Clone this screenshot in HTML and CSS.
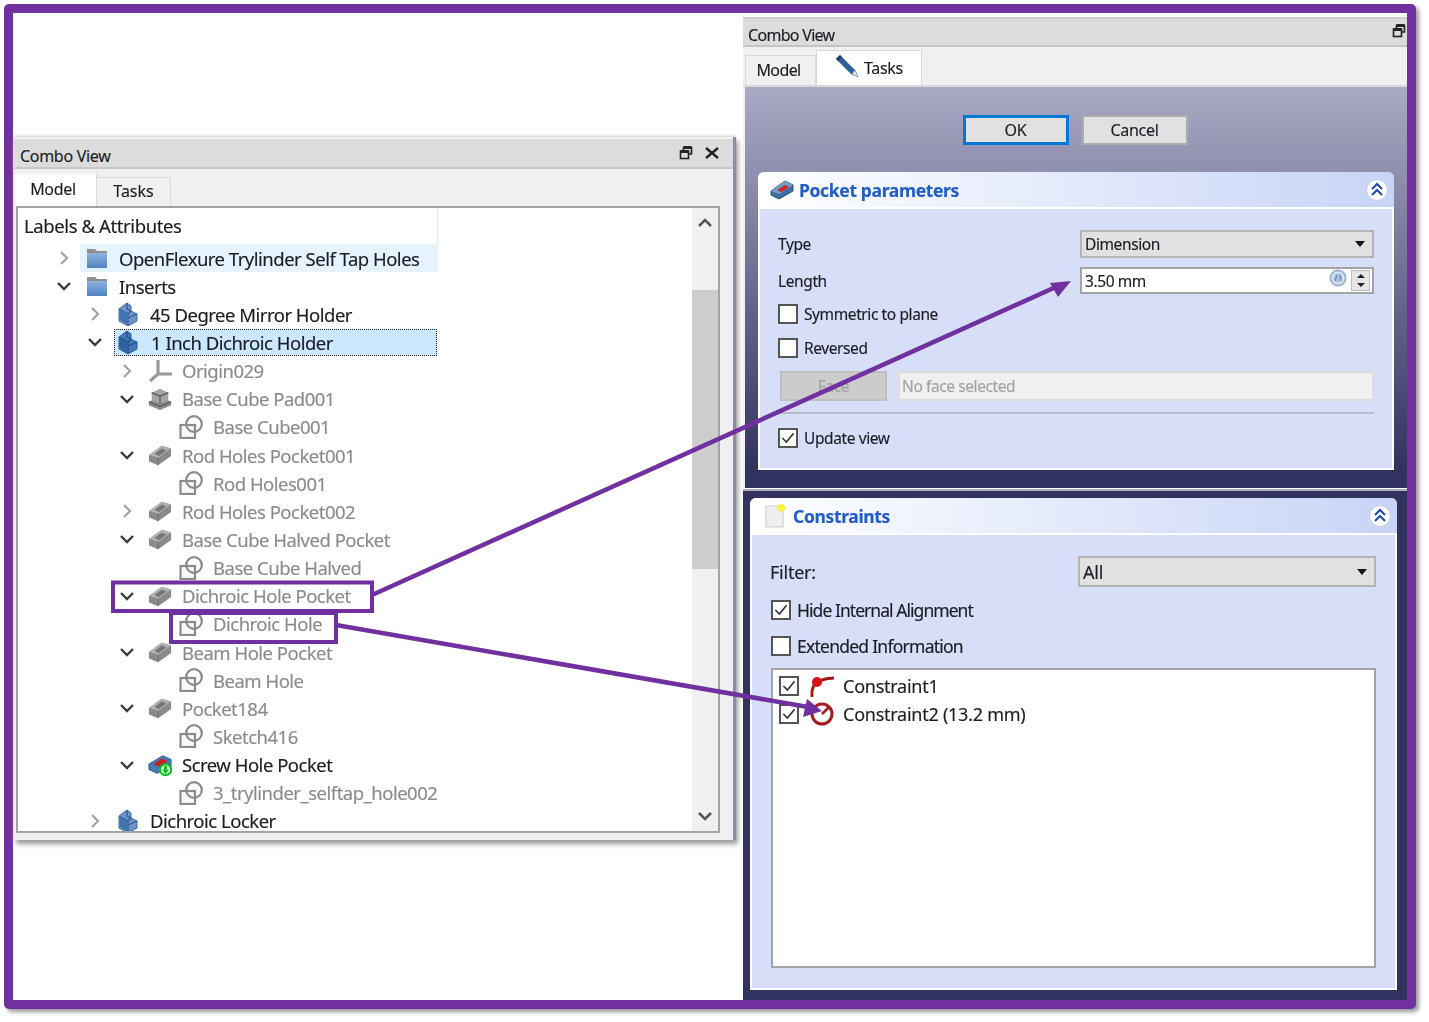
FILE: index.html
```html
<!DOCTYPE html>
<html lang="en">
<head>
<meta charset="utf-8">
<title>Combo View</title>
<link rel="stylesheet" href="styles.css">
</head>
<body>
<svg class="sprite" width="0" height="0" aria-hidden="true">
  <defs>
    <linearGradient id="gFolder" x1="0" y1="0" x2="0" y2="1"><stop offset="0" stop-color="#8db4e2"/><stop offset="1" stop-color="#4f82c2"/></linearGradient>
    <symbol id="folder" viewBox="0 0 24 24">
      <path d="M2 3h8l2 2h10v16H2z" fill="#8f8f8f"/>
      <path d="M2 7h20v15H2z" fill="url(#gFolder)"/>
    </symbol>
    <symbol id="part" viewBox="0 0 22 24">
      <path d="M2 7 10 1l4 3v5l6 3v7l-9 5-9-5z" fill="#3f78ba" stroke="#2a5b96"/>
      <path d="M10 1v6l4 2M2 7l9 5v12M11 12l3-3M11 16l9-4" fill="none" stroke="#234f86" stroke-width="1.2"/>
      <path d="M3 8l7 4v10l-7-4z" fill="#2e639f"/>
    </symbol>
    <symbol id="partDim" viewBox="0 0 22 24">
      <path d="M2 7 10 1l4 3v5l6 3v7l-9 5-9-5z" fill="#6d94c4" stroke="#3d6a9f"/>
      <path d="M10 1v6l4 2M2 7l9 5v12M11 12l3-3M11 16l9-4" fill="none" stroke="#2c5a90" stroke-width="1.2"/>
      <path d="M3 8l7 4v10l-7-4z" fill="#3f74ae"/>
    </symbol>
    <symbol id="pocket" viewBox="0 0 26 24">
      <path d="M1 12 15 2l10 3v8L11 23 1 19z" fill="#8a8a8a"/>
      <path d="M1 12 15 2l10 3-14 10z" fill="#b0b0b0"/>
      <path d="M7 11l8-6 5 2-8 6z" fill="#767676"/>
      <path d="M11 15v8" stroke="#6a6a6a"/>
    </symbol>
    <symbol id="pad" viewBox="0 0 26 24">
      <path d="M1 15l12-6 12 6v4l-12 5-12-5z" fill="#8c8c8c"/>
      <path d="M4 5l9-4 9 4v8l-9 4-9-4z" fill="#a5a5a5"/>
      <path d="M4 5l9 4 9-4M13 9v8" fill="none" stroke="#5f5f5f" stroke-width="1.500"/>
      <path d="M1 15l12 5 12-5" fill="none" stroke="#5f5f5f" stroke-width="1.500"/>
    </symbol>
    <symbol id="sketch" viewBox="0 0 24 24">
      <rect x="1.500" y="10" width="14.500" height="13" fill="#f8f8f8" stroke="#8b8b8b" stroke-width="2.200"/>
      <circle cx="15" cy="9" r="7.800" fill="none" stroke="#8b8b8b" stroke-width="2.200"/>
    </symbol>
    <symbol id="origin" viewBox="0 0 24 24">
      <path d="M10 1v14L2 22M10 15h14" fill="none" stroke="#999" stroke-width="3.200"/>
    </symbol>
    <symbol id="screw" viewBox="0 0 26 24">
      <path d="M1 11 16 2l9 4v7L10 21 1 17z" fill="#4679b5" stroke="#2b5a93"/>
      <path d="M6 11l9-6 6 3-10 6z" fill="#c62020"/>
      <circle cx="19" cy="17" r="6" fill="#fff" stroke="#0ec020" stroke-width="2.400"/>
      <path d="M19 22l-4-5h2.400v-4h3.200v4H23z" fill="#0ec020"/>
    </symbol>
    <symbol id="pocketBlue" viewBox="0 0 24 20">
      <path d="M1 11 15 1l8 4v6L9 19l-8-4z" fill="#3f6f9f" stroke="#27527e"/>
      <path d="M1 11 15 1l8 4-14 9z" fill="#6f9cc8"/>
      <path d="M7 10l8-5 4 2-8 5z" fill="#d12020"/>
    </symbol>
    <symbol id="pencil" viewBox="0 0 24 24">
      <path d="M1 5 5 1l15 15 3 7-7-3z" fill="#2f5f9b"/>
      <path d="M1 5 5 1l2 2-4 4z" fill="#1a3c6c"/>
      <path d="M17 20l3-4 3 7z" fill="#eee" stroke="#777" stroke-width=".6"/>
    </symbol>
    <symbol id="note" viewBox="0 0 22 26">
      <rect x="1" y="3" width="18" height="22" fill="#efefef" stroke="#c9c9c9"/>
      <circle cx="17" cy="5" r="4" fill="#fbf23a"/>
    </symbol>
    <symbol id="collapse" viewBox="0 0 24 24">
      <circle cx="12" cy="12" r="10.500" fill="#fff" stroke="#c3cbe0"/>
      <path d="M7 11l5-5 5 5M7 17l5-5 5 5" fill="none" stroke="#1d47a8" stroke-width="2"/>
    </symbol>
    <symbol id="float" viewBox="0 0 14 14">
      <path d="M4.500 4V1.500h8V8H10" fill="none" stroke="#222" stroke-width="1.600"/>
      <path d="M4.500 1.500h8" stroke="#222" stroke-width="3"/>
      <rect x="1.500" y="5" width="8" height="7.500" fill="none" stroke="#222" stroke-width="1.600"/>
      <path d="M1.500 5.500h8" stroke="#222" stroke-width="3"/>
    </symbol>
    <symbol id="close" viewBox="0 0 14 14">
      <path d="M1 2l12 10M13 2 1 12" stroke="#222" stroke-width="2.400"/>
    </symbol>
    <symbol id="expr" viewBox="0 0 18 18">
      <circle cx="9" cy="9" r="8" fill="#a9bfdc" stroke="#8ea6c6"/>
      <circle cx="9" cy="9" r="5.500" fill="none" stroke="#dfe8f4" stroke-width="1.600"/>
      <path d="M6 12 8 6M11 6l1 6" stroke="#5f7ea8"/>
    </symbol>
    <symbol id="tick" viewBox="0 0 20 20">
      <path d="M3 10l5 5 9-11" fill="none" stroke="#333" stroke-width="2"/>
    </symbol>
    <symbol id="chevR" viewBox="0 0 16 16">
      <path d="M5 2l6 6-6 6" fill="none" stroke="#a3a3a3" stroke-width="2.200"/>
    </symbol>
    <symbol id="chevD" viewBox="0 0 16 16">
      <path d="M2 5l6 6 6-6" fill="none" stroke="#3a3a3a" stroke-width="2.400"/>
    </symbol>
    <symbol id="tangent" viewBox="0 0 26 24">
      <path d="M3 23C2 15 5 9 10 7c5-2 10-3 15-3" fill="none" stroke="#a3171a" stroke-width="3"/>
      <circle cx="8" cy="8" r="5" fill="#d9101a"/>
    </symbol>
    <symbol id="radius" viewBox="0 0 26 26">
      <circle cx="13" cy="13" r="10" fill="none" stroke="#a51c20" stroke-width="3"/>
      <path d="M13 13l7-7" stroke="#a51c20" stroke-width="2.600"/>
    </symbol>
  </defs>
</svg>

<div class="frame">

  <section class="window window-left">
    <header class="titlebar titlebar-left">
      <span class="title-text">Combo View</span>
      <span class="title-actions">
        <svg class="ti"><use href="#float"/></svg>
        <svg class="ti"><use href="#close"/></svg>
      </span>
    </header>
    <nav class="tabs tabs-left">
      <span class="tab tab-model-on">Model</span>
      <span class="tab tab-tasks-off">Tasks</span>
    </nav>
    <div class="treebox">
      <div class="treecol">
        <div class="treehead">Labels &amp; Attributes</div>
        <div class="row l0"><svg class="chev"><use href="#chevR"/></svg><span class="item hover"><svg class="ic"><use href="#folder"/></svg><span>OpenFlexure Trylinder Self Tap Holes</span></span></div>
        <div class="row l0"><svg class="chev"><use href="#chevD"/></svg><span class="item"><svg class="ic"><use href="#folder"/></svg><span>Inserts</span></span></div>
        <div class="row l1"><svg class="chev"><use href="#chevR"/></svg><span class="item"><svg class="ic"><use href="#partDim"/></svg><span>45 Degree Mirror Holder</span></span></div>
        <div class="row l1"><svg class="chev"><use href="#chevD"/></svg><span class="item selected"><svg class="ic"><use href="#part"/></svg><span>1 Inch Dichroic Holder</span></span></div>
        <div class="row l2 dim"><svg class="chev"><use href="#chevR"/></svg><span class="item"><svg class="ic"><use href="#origin"/></svg><span>Origin029</span></span></div>
        <div class="row l2 dim"><svg class="chev"><use href="#chevD"/></svg><span class="item"><svg class="ic"><use href="#pad"/></svg><span>Base Cube Pad001</span></span></div>
        <div class="row l3 dim"><span class="chev"></span><span class="item"><svg class="ic"><use href="#sketch"/></svg><span>Base Cube001</span></span></div>
        <div class="row l2 dim"><svg class="chev"><use href="#chevD"/></svg><span class="item"><svg class="ic"><use href="#pocket"/></svg><span>Rod Holes Pocket001</span></span></div>
        <div class="row l3 dim"><span class="chev"></span><span class="item"><svg class="ic"><use href="#sketch"/></svg><span>Rod Holes001</span></span></div>
        <div class="row l2 dim"><svg class="chev"><use href="#chevR"/></svg><span class="item"><svg class="ic"><use href="#pocket"/></svg><span>Rod Holes Pocket002</span></span></div>
        <div class="row l2 dim"><svg class="chev"><use href="#chevD"/></svg><span class="item"><svg class="ic"><use href="#pocket"/></svg><span>Base Cube Halved Pocket</span></span></div>
        <div class="row l3 dim"><span class="chev"></span><span class="item"><svg class="ic"><use href="#sketch"/></svg><span>Base Cube Halved</span></span></div>
        <div class="row l2 dim"><svg class="chev"><use href="#chevD"/></svg><span class="item"><svg class="ic"><use href="#pocket"/></svg><span>Dichroic Hole Pocket</span></span></div>
        <div class="row l3 dim"><span class="chev"></span><span class="item"><svg class="ic"><use href="#sketch"/></svg><span>Dichroic Hole</span></span></div>
        <div class="row l2 dim"><svg class="chev"><use href="#chevD"/></svg><span class="item"><svg class="ic"><use href="#pocket"/></svg><span>Beam Hole Pocket</span></span></div>
        <div class="row l3 dim"><span class="chev"></span><span class="item"><svg class="ic"><use href="#sketch"/></svg><span>Beam Hole</span></span></div>
        <div class="row l2 dim"><svg class="chev"><use href="#chevD"/></svg><span class="item"><svg class="ic"><use href="#pocket"/></svg><span>Pocket184</span></span></div>
        <div class="row l3 dim"><span class="chev"></span><span class="item"><svg class="ic"><use href="#sketch"/></svg><span>Sketch416</span></span></div>
        <div class="row l2"><svg class="chev"><use href="#chevD"/></svg><span class="item"><svg class="ic"><use href="#screw"/></svg><span>Screw Hole Pocket</span></span></div>
        <div class="row l3 dim"><span class="chev"></span><span class="item"><svg class="ic"><use href="#sketch"/></svg><span>3_trylinder_selftap_hole002</span></span></div>
        <div class="row l1"><svg class="chev"><use href="#chevR"/></svg><span class="item"><svg class="ic"><use href="#partDim"/></svg><span>Dichroic Locker</span></span></div>
      </div>
      <div class="vscroll">
        <span class="sb-btn"><svg class="sb-ic" viewBox="0 0 16 16"><path d="M2 11l6-6 6 6" fill="none" stroke="#555" stroke-width="2.600"/></svg></span>
        <span class="sb-thumb"></span>
        <span class="sb-btn sb-btn-bottom"><svg class="sb-ic" viewBox="0 0 16 16"><path d="M2 5l6 6 6-6" fill="none" stroke="#555" stroke-width="2.600"/></svg></span>
      </div>
    </div>
  </section>

  <section class="window window-rtop">
    <div class="stripe"></div>
    <header class="titlebar titlebar-right">
      <span class="title-text title-narrow">Combo View</span>
      <svg class="ti"><use href="#float"/></svg>
    </header>
    <nav class="tabs tabs-right">
      <span class="tab tab-model-off">Model</span>
      <span class="tab tab-tasks-on"><svg class="pencil"><use href="#pencil"/></svg>Tasks</span>
    </nav>
    <div class="taskpanel">
      <div class="dialog-buttons">
        <button class="btn btn-default">OK</button>
        <button class="btn">Cancel</button>
      </div>
      <div class="card card-pocket">
        <div class="card-head">
          <svg class="head-ic"><use href="#pocketBlue"/></svg>
          <span class="card-title">Pocket parameters</span>
          <svg class="collapse"><use href="#collapse"/></svg>
        </div>
        <div class="card-body body-pocket">
          <div class="frow"><span>Type</span><span class="select select-pocket">Dimension<i class="caret"></i></span></div>
          <div class="frow frow-length"><span>Length</span>
            <span class="input"><span class="input-text">3.50 mm</span><svg class="expr"><use href="#expr"/></svg><span class="spin"><i class="spin-up"></i><i class="spin-down"></i></span></span>
          </div>
          <label class="check check-sym"><span class="box"></span>Symmetric to plane</label>
          <label class="check check-rev"><span class="box"></span>Reversed</label>
          <div class="face-row">
            <span class="btn-face">Face</span>
            <span class="face-input">No face selected</span>
          </div>
          <div class="sep"></div>
          <label class="check check-upd"><span class="box"><svg class="tick"><use href="#tick"/></svg></span>Update view</label>
        </div>
      </div>
    </div>
  </section>

  <section class="window window-rbottom">
    <div class="card card-cons">
      <div class="card-head">
        <svg class="note"><use href="#note"/></svg>
        <span class="card-title">Constraints</span>
        <svg class="collapse"><use href="#collapse"/></svg>
      </div>
      <div class="card-body body-cons">
        <div class="frow-filter"><span>Filter:</span><span class="select select-filter">All<i class="caret"></i></span></div>
        <label class="check check-hide lg"><span class="box"><svg class="tick"><use href="#tick"/></svg></span>Hide Internal Alignment</label>
        <label class="check check-ext lg"><span class="box"></span>Extended Information</label>
        <div class="conlist">
          <div class="conrow"><span class="box"><svg class="tick"><use href="#tick"/></svg></span><svg class="con-ic"><use href="#tangent"/></svg><span>Constraint1</span></div>
          <div class="conrow"><span class="box"><svg class="tick"><use href="#tick"/></svg></span><svg class="con-ic"><use href="#radius"/></svg><span>Constraint2 (13.2 mm)</span></div>
        </div>
      </div>
    </div>
  </section>

  <svg class="overlay" viewBox="0 0 1429 1022" width="1429" height="1022" aria-hidden="true">
    <g fill="none" stroke="#7030a0" stroke-width="4">
      <rect x="113" y="582.500" width="259" height="28.500"/>
      <rect x="171" y="613" width="165" height="29"/>
    </g>
    <g fill="none" stroke="#7030a0" stroke-width="4.500">
      <path d="M372 595 1058 286"/>
      <path d="M336 625 808 707"/>
    </g>
    <path d="M1071 281 1050 283 1058 297z" fill="#7030a0"/>
    <path d="M822 711 807 699 803 717z" fill="#7030a0"/>
  </svg>
</div>
</body>
</html>
```

FILE: styles.css
```css
* { box-sizing: border-box; }

html, body { margin: 0; padding: 0; background: #fff; }

body {
  width: 1429px;
  height: 1022px;
  overflow: hidden;
  font-family: "Noto Sans", "Open Sans", sans-serif;
  color: #1c1c24;
  -webkit-text-stroke: .15px;
}

.sprite { position: absolute; }

.frame {
  position: relative;
  width: 1412px;
  height: 1005px;
  margin: 4px 0 0 4px;
  border: 9px solid #7030a0;
  border-radius: 5px;
  background: #fff;
  box-shadow: 3px 3px 4px #9a9a9a;
}

.window { position: absolute; display: flex; flex-direction: column; filter: blur(.3px); }

.window-left {
  left: 1px;
  top: 124px;
  width: 722px;
  height: 703px;
  padding-top: 2px;
  background: #f0f0f0;
  border-right: 3px solid #8d8da8;
  box-shadow: 2px 4px 5px #9a9a9a, 0 -2px 2px #e4e4e4;
}

.window-rtop { left: 730px; top: 1px; width: 664px; height: 474px; background: #f0f0f0; }

.window-rbottom {
  left: 730px;
  top: 476px;
  width: 664px;
  height: 511px;
  padding: 7px 10px 10px 7px;
  background: #33335f;
  border-top: 2px solid #b0b0b0;
}

.titlebar { display: flex; align-items: center; justify-content: space-between; flex: none; background: #dcdcdc; }

.title-text { font-size: 16px; letter-spacing: -.3px; }

.title-narrow { letter-spacing: -.7px; }

.titlebar-left { height: 30px; padding: 6px 14px 0 6px; border-bottom: 2px solid #c8c8c8; }

.title-actions { display: flex; gap: 12px; margin-top: -6px; }

.ti { width: 14px; height: 14px; }

.titlebar-right { height: 28px; padding: 5px 1px 0 5px; border-bottom: 2px solid #c4c4c4; }

.titlebar-right .ti { margin-top: -7px; }

.stripe { height: 5px; flex: none; background: #fff; border-bottom: 2px solid #cfcfcf; }

.tabs { display: flex; align-items: flex-end; flex: none; font-size: 16px; letter-spacing: -.3px; }

.tabs-left { height: 37px; padding-left: 1px; }

.tabs-right { height: 40px; padding-left: 2px; border-bottom: 2px solid #d9d9d9; }

.tab { display: flex; align-items: center; justify-content: center; }

.tab-model-on { width: 82px; height: 32px; padding: 0 5px 2px 0; background: #fff; border-right: 1px solid #d9d9d9; }

.tab-tasks-off { width: 74px; height: 29px; padding: 0 0 2px 0; letter-spacing: 0; border: 1px solid #d9d9d9; border-bottom: 0; border-left: 0; }

.tab-model-off { width: 71px; height: 30px; padding: 0 4px 1px 0; letter-spacing: -.6px; border: 1px solid #d9d9d9; border-bottom: 0; }

.tab-tasks-on { width: 106px; height: 35px; gap: 5px; background: #fff; border: 1px solid #d9d9d9; border-bottom: 0; }

.pencil { width: 24px; height: 24px; margin-bottom: 4px; }

.treebox {
  display: flex;
  justify-content: space-between;
  width: 704px;
  height: 627px;
  margin: 0 0 0 2px;
  overflow: hidden;
  background: #fff;
  border: 2px solid #a2a2ac;
}

.treecol { width: 420px; font-size: 18.500px; letter-spacing: -.5px; }

.treehead { height: 36px; padding: 5px 0 0 6px; letter-spacing: -.4px; border-right: 1px solid #e4e4e4; }

.row { display: flex; align-items: center; height: 28.150px; white-space: nowrap; }

.l0 { padding-left: 38px; }
.l1 { padding-left: 69px; }
.l2 { padding-left: 101px; }
.l3 { padding-left: 132px; }

.chev { flex: none; width: 16px; height: 16px; }

.item { display: flex; flex: 1; align-items: center; height: 100%; margin-left: 8px; padding-left: 5px; }

.hover { background: #e5f3ff; }

.selected { height: 27px; margin: 0 1px 0 11px; padding-left: 2px; background: #cce8ff; outline: 1.500px dotted #222; outline-offset: -1px; }

.selected .ic { margin-right: 11px; }

.ic { flex: none; width: 24px; height: 24px; margin-right: 10px; }

.dim { color: #8b8b8b; }

.vscroll { flex: none; display: flex; flex-direction: column; width: 26px; background: #f0f0f0; }

.sb-btn { display: flex; justify-content: center; align-items: center; height: 30px; }

.sb-btn-bottom { margin-top: auto; }

.sb-ic { width: 16px; height: 16px; }

.sb-thumb { height: 279px; margin-top: 52px; background: #cdcdcd; }

.taskpanel {
  flex: 1;
  margin: 0 0 0 2px;
  padding: 28px 13px 18px 13px;
  display: flex;
  flex-direction: column;
  background: linear-gradient(#aaaac5, #32325f 95%);
}

.dialog-buttons { display: flex; justify-content: center; gap: 13px; flex: none; padding-right: 2px; }

.btn {
  width: 106px;
  height: 30px;
  padding: 0;
  font: 16px "Noto Sans", sans-serif;
  letter-spacing: -.3px;
  color: #1c1c24;
  background: #e1e1e1;
  border: 2px solid #adadad;
}

.btn-default { border: 3px solid #0078d7; }

.card { display: flex; flex: 1; flex-direction: column; background: #d6dff7; border-radius: 6px 6px 0 0; }

.card-pocket { margin-top: 27px; }

.card-head {
  display: flex;
  align-items: center;
  flex: none;
  height: 37px;
  padding: 0 5px 0 12px;
  background: linear-gradient(90deg, #fff, #c7d4f7);
  border-bottom: 2px solid #fff;
  border-radius: 6px 6px 0 0;
}

.head-ic { width: 24px; height: 20px; margin-right: 5px; }

.note { width: 21px; height: 25px; margin: 0 7px 0 3px; }

.card-title { flex: 1; font: bold 17.500px "Noto Sans", sans-serif; letter-spacing: -.35px; color: #215dc6; }

.collapse { width: 24px; height: 24px; }

.card-body { flex: 1; border: 2px solid #fff; border-top: 0; }

.body-pocket { padding: 21px 18px 0 18px; font-size: 15.500px; letter-spacing: -.4px; }

.frow { display: flex; align-items: center; justify-content: space-between; height: 28px; }

.frow-length { height: 27px; margin-top: 9px; }

.select {
  position: relative;
  display: flex;
  align-items: center;
  padding-left: 3px;
  background: #e1e1e1;
  border: 2px solid #b4b4b4;
}

.select-pocket { width: 294px; height: 28px; }

.select-filter { width: 298px; height: 31px; }

.caret {
  position: absolute;
  right: 7px;
  top: 50%;
  margin-top: -3px;
  border-top: 6px solid #111;
  border-left: 5px solid transparent;
  border-right: 5px solid transparent;
}

.input {
  display: flex;
  align-items: center;
  width: 294px;
  height: 27px;
  padding-left: 3px;
  background: #fff;
  border: 2px solid #a4a4a4;
}

.input-text { flex: 1; }

.expr { width: 18px; height: 18px; margin: -6px 4px 0 0; }

.spin { display: flex; flex-direction: column; width: 19px; height: 21px; margin-right: 2px; background: #e6e6e6; border: 1px solid #bdbdbd; }

.spin-up, .spin-down { flex: 1; display: flex; align-items: center; justify-content: center; }

.spin-up::before { content: ""; border-bottom: 4px solid #222; border-left: 4px solid transparent; border-right: 4px solid transparent; }

.spin-down::before { content: ""; border-top: 4px solid #222; border-left: 4px solid transparent; border-right: 4px solid transparent; }

.check { display: flex; align-items: center; gap: 6px; height: 20px; }

.box {
  display: block;
  flex: none;
  width: 20px;
  height: 20px;
  background: #fff;
  border: 2px solid #555;
}

.tick { display: block; width: 16px; height: 16px; }

.check-sym { margin-top: 10px; }

.check-rev { margin-top: 14px; }

.check-upd { margin-top: 14px; }

.face-row { display: flex; gap: 11px; height: 30px; margin-top: 13px; padding-left: 2px; color: #a3a3a3; }

.btn-face { display: flex; align-items: center; justify-content: center; width: 107px; background: #ccc; border: 2px solid #bfbfbf; }

.face-input { display: flex; flex: 1; align-items: center; padding-left: 2px; background: #f0f0f0; border: 2px solid #dcdcdc; }

.sep { height: 2px; margin-top: 11px; background: #b8bccb; }

.body-cons { padding: 21px 19px 20px 18px; font-size: 18px; letter-spacing: -.25px; }

.frow-filter { display: flex; align-items: center; justify-content: space-between; height: 31px; }

.lg { margin-left: 1px; font-size: 17.500px; letter-spacing: -.75px; }

.check-hide { margin-top: 13px; letter-spacing: -.95px; }

.check-ext { margin-top: 16px; }

.conlist { height: 300px; margin: 12px 0 0 1px; padding: 2px 0 0 6px; background: #fff; border: 2px solid #a4a4a4; }

.conrow { display: flex; align-items: center; height: 28px; }

.con-ic { width: 26px; height: 26px; margin: 0 8px 0 10px; }

.overlay { position: absolute; left: -13px; top: -13px; pointer-events: none; }
```
